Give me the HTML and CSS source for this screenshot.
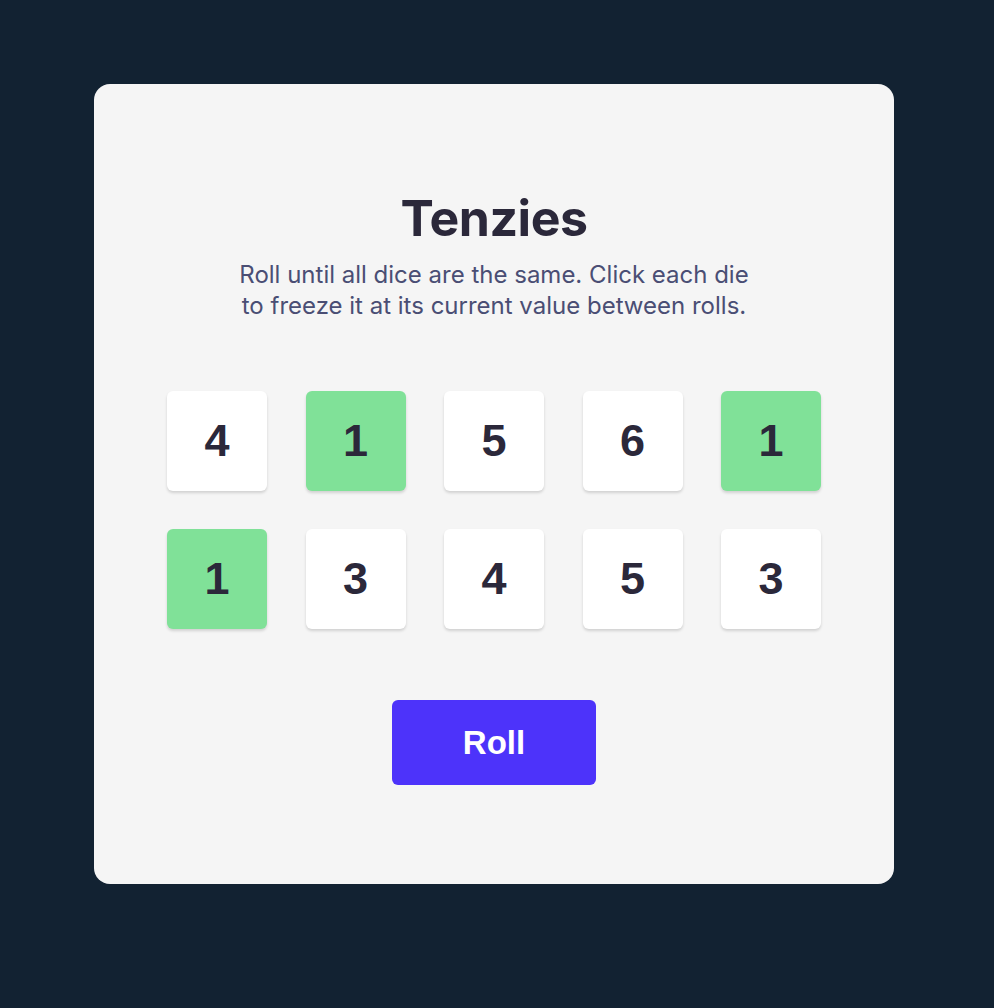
FILE: index.html
```html
<!DOCTYPE html>
<html lang="en">
<head>
<meta charset="utf-8">
<title>Tenzies</title>
<link rel="stylesheet" href="styles.css">
</head>
<body>
<main class="card">
  <h1 class="title">Tenzies</h1>
  <p class="instructions">Roll until all dice are the same. Click each die<br>to freeze it at its current value between rolls.</p>
  <div class="dice">
    <button class="die">4</button>
    <button class="die held">1</button>
    <button class="die">5</button>
    <button class="die">6</button>
    <button class="die held">1</button>
    <button class="die held">1</button>
    <button class="die">3</button>
    <button class="die">4</button>
    <button class="die">5</button>
    <button class="die">3</button>
  </div>
  <button class="roll">Roll</button>
</main>
</body>
</html>
```
FILE: styles.css
```css
html, body {
  margin: 0;
  height: 100%;
}
body {
  background: #122232;
  padding: 84px 0 0 94px;
  box-sizing: border-box;
  font-family: Inter, "Noto Sans", sans-serif;
}
.card {
  width: 800px;
  height: 800px;
  box-sizing: border-box;
  background: #f5f5f5;
  border-radius: 16px;
  display: flex;
  flex-direction: column;
  align-items: center;
  padding-top: 103px;
}
.title {
  margin: 0;
  font-size: 50px;
  line-height: 62px;
  font-weight: 700;
  color: #2b283a;
  letter-spacing: -0.5px;
}
.instructions {
  margin: 10px 0 0;
  font-size: 24px;
  line-height: 31px;
  color: #4a4e74;
  text-align: center;
}
.dice {
  margin-top: 70px;
  display: grid;
  grid-template-columns: repeat(5, 100px);
  gap: 38px 38.5px;
}
.die {
  width: 100px;
  height: 100px;
  border: none;
  border-radius: 6px;
  background: #ffffff;
  box-shadow: 0 2px 3px rgba(0, 0, 0, 0.15);
  font-family: "Liberation Sans", Arial, sans-serif;
  font-weight: 700;
  font-size: 45px;
  color: #2b283a;
  padding: 0;
}
.die.held {
  background: #80e198;
}
.roll {
  margin-top: 71px;
  width: 204px;
  height: 85px;
  border: none;
  border-radius: 6px;
  background: #4d33fa;
  color: #ffffff;
  font-family: "Liberation Sans", Arial, sans-serif;
  font-weight: 700;
  font-size: 33px;
  padding: 0;
}
```
